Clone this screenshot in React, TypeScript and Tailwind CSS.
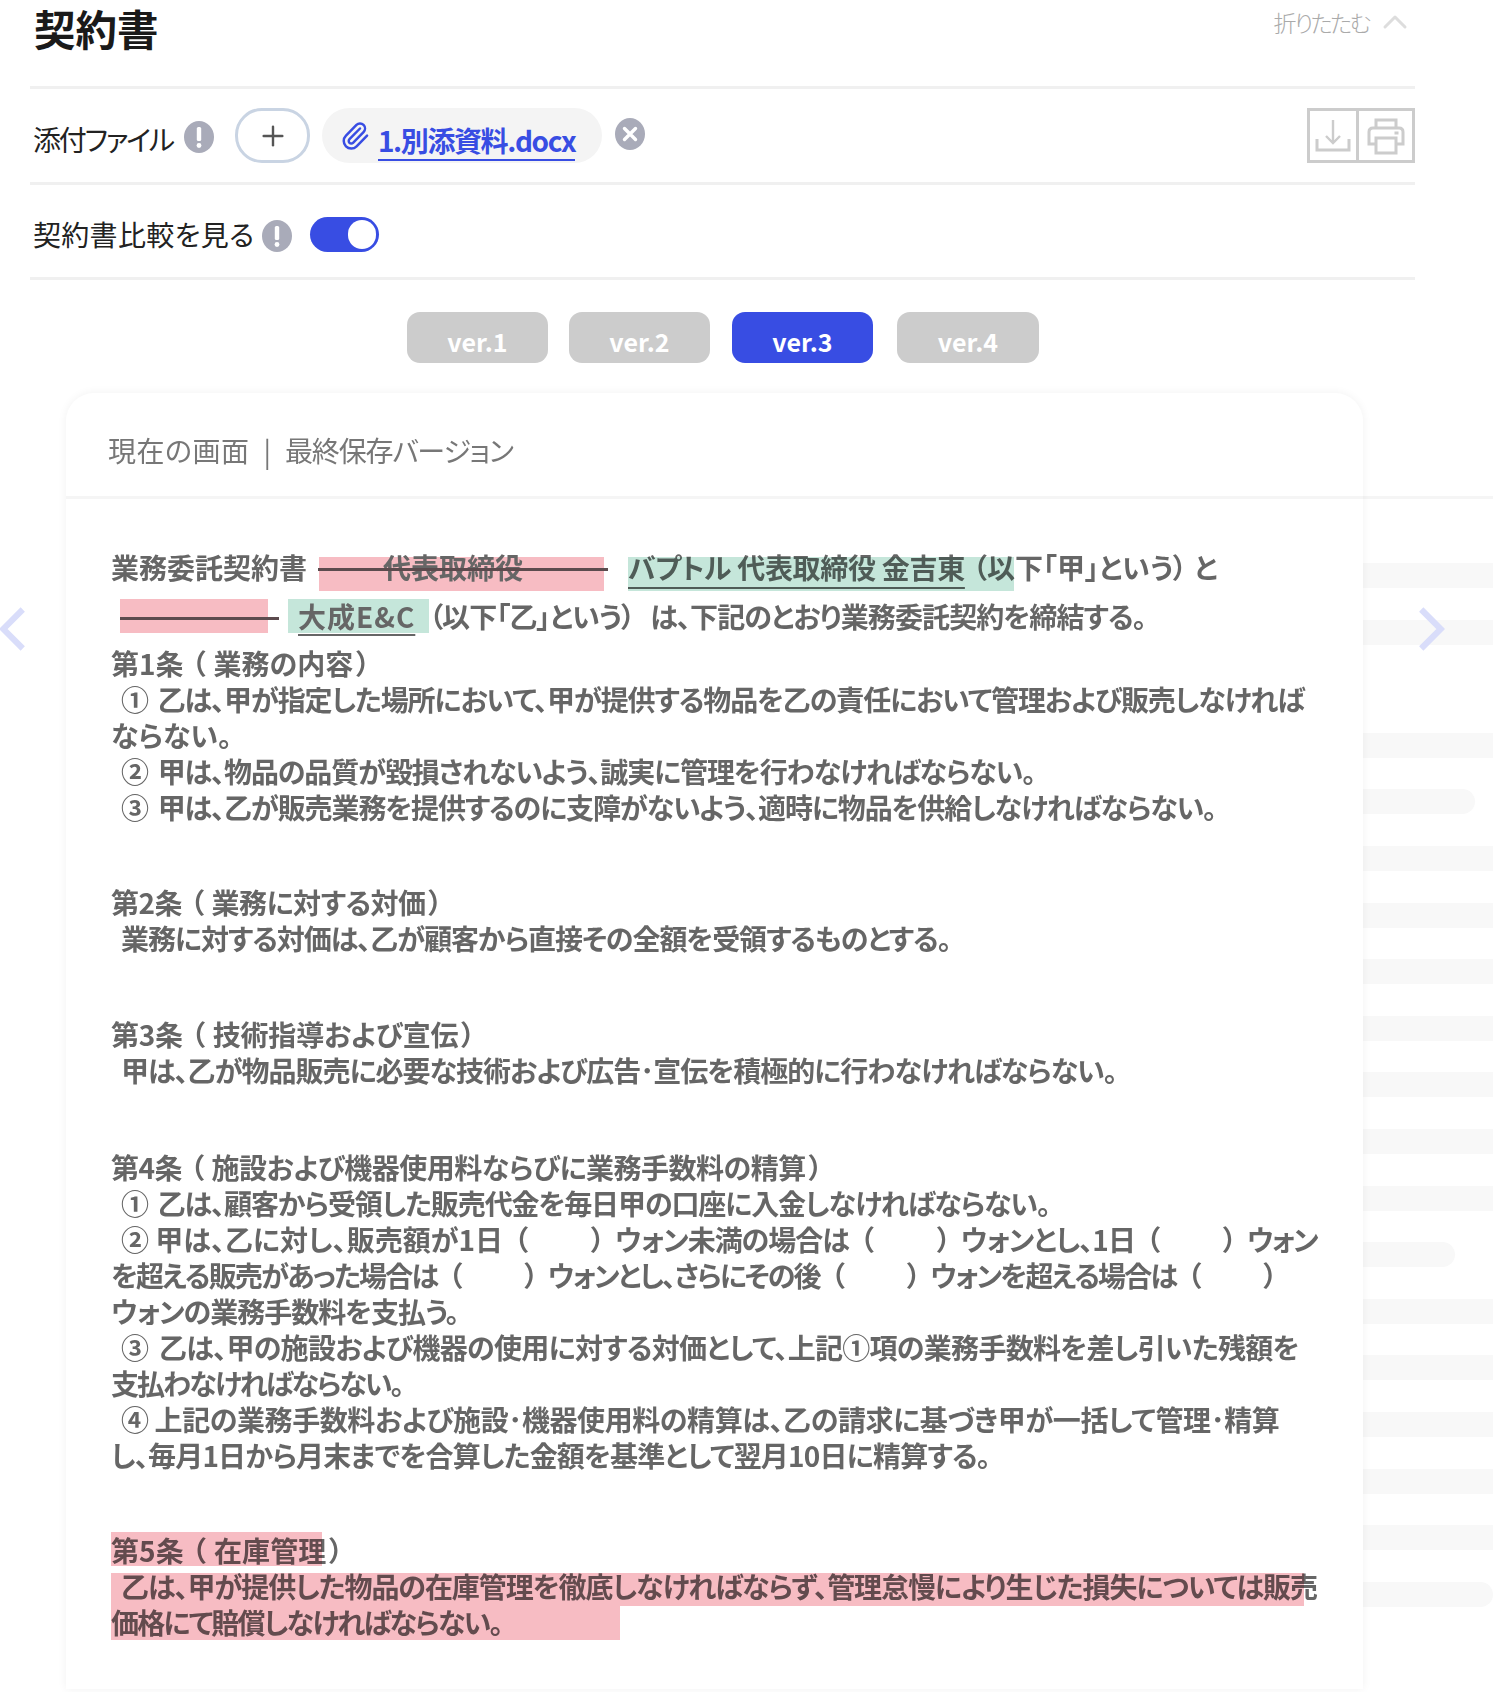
import { ChevronLeft, ChevronRight, ChevronUp, Paperclip, Plus } from "lucide-react";

const SKELETON = [
  "h-[25px] w-full",
  "h-[25px] w-full",
  "h-[25px] w-full bg-transparent",
  "h-[25px] w-full",
  "h-[25px] w-[112px] rounded-r-full",
  "h-[25px] w-full",
  "h-[25px] w-full",
  "h-[25px] w-full",
  "h-[25px] w-full",
  "h-[25px] w-full",
  "h-[25px] w-full",
  "h-[25px] w-full",
  "h-[25px] w-[92px] rounded-r-full",
  "h-[25px] w-full",
  "h-[25px] w-full",
  "h-[25px] w-full",
  "h-[25px] w-full",
  "h-[25px] w-full",
  "h-[25px] w-[130px] rounded-r-full",
];

function InfoIcon({ className }: { className?: string }) {
  return (
    <svg viewBox="0 0 30 32" className={`h-[32px] w-[30px] shrink-0 ${className ?? ""}`}>
      <ellipse cx="15" cy="16" rx="15" ry="16" fill="#a9abb9" />
      <rect x="12.8" y="6" width="4.4" height="14" rx="1.5" fill="#fff" />
      <circle cx="15" cy="24.5" r="2.4" fill="#fff" />
    </svg>
  );
}

function Line({ children, className }: { children: React.ReactNode; className?: string }) {
  return <div className={`h-[36px] whitespace-pre leading-[36px] ${className ?? ""}`}>{children}</div>;
}

// blank to fill in, written in the contract as （　　）
function Blank() {
  return (
    <span className="mx-[11px]">
      （<span className="inline-block w-[64px]" />）
    </span>
  );
}

function Open() {
  return <span className="mx-[8px]">（</span>;
}

function Close() {
  return <span className="ml-[3px]">）</span>;
}

function Version({ label, active, className }: { label: string; active?: boolean; className?: string }) {
  return (
    <button
      className={`h-[51px] rounded-[13px] pt-[7px] text-[25px] font-bold leading-[40px] text-white ${active ? "bg-[#384de3]" : "bg-[#cccccc]"} ${className ?? ""}`}
    >
      {label}
    </button>
  );
}

export default function App() {
  return (
    <div className="relative h-[1692px] w-[1493px] overflow-hidden bg-white font-['Noto_Sans_CJK_JP',sans-serif] [font-feature-settings:'palt']">
      <div className="ml-[30px] w-[1385px]">
        <div className="flex h-[89px] items-start justify-between border-b-[3px] border-[#f0f0f0]">
          <h1 className="pl-[4px] text-[41.5px] font-bold leading-[56px] text-[#1a1a1a]">契約書</h1>
          <div className="flex items-center pt-[6px]">
            <span className="text-[23px] font-light leading-[32px] tracking-[-2.5px] text-[#aaaaaa]">折りたたむ</span>
            <ChevronUp className="-my-[4px] ml-[6px] h-[40px] w-[40px] text-[#dddddd]" strokeWidth={1.8} />
          </div>
        </div>

        <div className="flex h-[96px] items-start border-b-[3px] border-[#f0f0f0] pt-[19px]">
          <span className="w-[154px] whitespace-nowrap pl-[3px] pt-[11px] text-[28px] leading-[40px] tracking-[-2.2px] text-[#222222]">
            添付ファイル
          </span>
          <InfoIcon className="mt-[13px]" />
          <div className="ml-[21px] flex h-[55px] w-[75px] items-center justify-center rounded-[27px] border-[3px] border-[#c9d4e3]">
            <Plus className="h-[32px] w-[32px] text-[#555555]" strokeWidth={1.8} />
          </div>
          <div className="ml-[12px] flex h-[55px] w-[280px] items-center rounded-full bg-[#f4f4f4] pl-[18px]">
            <Paperclip className="h-[30px] w-[30px] text-[#384de3]" strokeWidth={2} />
            <span className="ml-[8px] mt-[11px] whitespace-nowrap border-b-[2px] border-[#384de3] text-[28px] font-bold leading-[38px] tracking-[-1.4px] text-[#384de3]">
              1.別添資料.docx
            </span>
          </div>
          <svg viewBox="0 0 30 32" className="ml-[13px] mt-[10px] h-[32px] w-[30px]">
            <ellipse cx="15" cy="16" rx="15" ry="16" fill="#a9abb9" />
            <path d="M9.5 10.5 L20.5 21.5 M20.5 10.5 L9.5 21.5" stroke="#fff" strokeWidth="3.4" strokeLinecap="round" />
          </svg>
          <div className="ml-auto flex h-[55px] w-[108px] border-[3px] border-[#cccccc]">
            <div className="flex w-[49px] items-center justify-center border-r-[3px] border-[#cccccc]">
              <svg viewBox="0 0 36 36" className="h-[36px] w-[36px]" fill="none" stroke="#cccccc">
                <path d="M18 2 V25 M11 18 L18 25 L25 18" strokeWidth="2.4" />
                <path d="M2 21 V32 H34 V21" strokeWidth="3" />
              </svg>
            </div>
            <div className="flex flex-1 items-center justify-center">
              <svg viewBox="0 0 38 38" className="h-[38px] w-[38px]" fill="none" stroke="#cccccc" strokeWidth="3">
                <path d="M9 11 V3 H29 V11" />
                <path d="M9 27 H2 V15 Q2 11 6 11 H32 Q36 11 36 15 V27 H29" />
                <path d="M9 21 H29 V36 H9 Z" />
                <rect x="28" y="15" width="3" height="2" fill="#cccccc" strokeWidth="1" />
              </svg>
            </div>
          </div>
        </div>

        <div className="flex h-[95px] items-start border-b-[3px] border-[#f0f0f0] pt-[29px]">
          <span className="w-[232px] whitespace-nowrap pl-[3px] text-[28px] leading-[40px] tracking-[0.3px] text-[#222222]">
            契約書比較を見る
          </span>
          <InfoIcon className="mt-[6px]" />
          <div className="ml-[18px] mt-[3px] flex h-[35px] w-[69px] items-center justify-end rounded-full bg-[#384de3] pr-[3px]">
            <div className="h-[29px] w-[28px] rounded-full bg-white" />
          </div>
        </div>
      </div>

      <div className="flex pl-[407px] pt-[32px]">
        <Version label="ver.1" className="w-[141px]" />
        <Version label="ver.2" className="ml-[21px] w-[141px]" />
        <Version label="ver.3" active className="ml-[22px] w-[141px]" />
        <Version label="ver.4" className="ml-[24px] w-[142px]" />
      </div>

      <div className="mt-[30px] flex pl-[66px]">
        <div className="relative z-10 h-[1296px] w-[1297px] rounded-t-[28px] bg-white shadow-[0_0_10px_rgba(0,0,0,0.06)]">
          <div className="h-[106px] whitespace-pre border-b-[3px] border-[#f5f5f5] pl-[42px] pt-[37px] text-[28px] leading-[40px] text-[#777777]">
            <span className="tracking-[0.5px]">現在の画面</span>
            <span className="mx-[14px]">|</span>
            <span className="tracking-[-1.2px]">最終保存バージョン</span>
          </div>

          <div className="pl-[45px] pt-[58px] text-[28px] font-bold text-[#666666]">
            <div className="flex h-[34px] whitespace-pre leading-[20px]">
              <span className="w-[208px]">業務委託契約書</span>
              <div className="relative h-[34px] w-[285px] bg-[#f7bcc3] pl-[64px] mix-blend-multiply">
                代表取締役
                <span className="absolute -left-[1px] top-[11px] h-[3px] w-[290px] bg-[#5c4b4e]" />
              </div>
              <div className="relative ml-[24px]">
                <span className="absolute left-0 top-0 h-[34px] w-[386px] bg-[#c5e6da] mix-blend-multiply" />
                <span className="tracking-[-0.3px] underline decoration-[2px] underline-offset-[8px]">バプトル 代表取締役 金吉東</span>
                <span className="ml-[8px]">（以下「甲」という）</span>
                <span className="ml-[7px]">と</span>
              </div>
            </div>

            <div className="mt-[8px] flex h-[34px] whitespace-pre pl-[9px] leading-[34px]">
              <div className="relative h-[34px] w-[148px] bg-[#f7bcc3]">
                <span className="absolute left-0 top-[18px] h-[3px] w-[159px] bg-[#5c4b4e]" />
              </div>
              <div className="ml-[20px] h-[34px] w-[141px] bg-[#c5e6da] pl-[10px]">
                <span className="tracking-[1px] underline decoration-[2px] underline-offset-[6px]">大成E&C</span>
              </div>
              <span className="tracking-[-0.9px]">
                （以下「乙」という）<span className="ml-[16px]">は、下記のとおり業務委託契約を締結する。</span>
              </span>
            </div>

            <div className="mt-[12px]">
              <Line>第1条<Open />業務の内容<Close /></Line>
              <Line className="pl-[10px] tracking-[-1.1px]">① {"\u2009"}乙は、甲が指定した場所において、甲が提供する物品を乙の責任において管理および販売しなければ</Line>
              <Line>ならない。</Line>
              <Line className="pl-[10px] tracking-[-1.1px]">② {"\u2009"}甲は、物品の品質が毀損されないよう、誠実に管理を行わなければならない。</Line>
              <Line className="pl-[10px] tracking-[-1.1px]">③ {"\u2009"}甲は、乙が販売業務を提供するのに支障がないよう、適時に物品を供給しなければならない。</Line>
            </div>

            <div className="mt-[59px]">
              <Line className="tracking-[-0.5px]">第2条<Open />業務に対する対価<Close /></Line>
              <Line className="pl-[10px] tracking-[-1.05px]">業務に対する対価は、乙が顧客から直接その全額を受領するものとする。</Line>
            </div>

            <div className="mt-[60px]">
              <Line className="tracking-[-0.2px]">第3条<Open />技術指導および宣伝<Close /></Line>
              <Line className="pl-[10px] tracking-[-1px]">甲は、乙が物品販売に必要な技術および広告･宣伝を積極的に行わなければならない。</Line>
            </div>

            <div className="mt-[61px]">
              <Line className="tracking-[-0.5px]">第4条<Open />施設および機器使用料ならびに業務手数料の精算<Close /></Line>
              <Line className="pl-[10px] tracking-[-1.1px]">① {"\u2009"}乙は、顧客から受領した販売代金を毎日甲の口座に入金しなければならない。</Line>
              <Line className="pl-[10px] tracking-[-1px]">
                <span className="tracking-[0px]">② 甲は、乙に対し、販売額が1日</span><Blank />ウォン未満の場合は<Blank />ウォンとし、1日<Blank /><span className="tracking-[-2px]">ウォン</span>
              </Line>
              <Line className="tracking-[-1.8px]">を超える販売があった場合は<Blank />ウォンとし、さらにその後<Blank />ウォンを超える場合は<Blank /></Line>
              <Line className="tracking-[-1px]">ウォンの業務手数料を支払う。</Line>
              <Line className="pl-[10px] tracking-[-0.7px]">③ {"\u2009"}乙は、甲の施設および機器の使用に対する対価として、上記①項の業務手数料を差し引いた残額を</Line>
              <Line className="tracking-[-2px]">支払わなければならない。</Line>
              <Line className="pl-[10px] tracking-[-0.4px]">④ 上記の業務手数料および施設･機器使用料の精算は、乙の請求に基づき甲が一括して管理･精算</Line>
              <Line className="tracking-[-0.8px]">し、毎月1日から月末までを合算した金額を基準として翌月10日に精算する。</Line>
            </div>

            <div className="relative mt-[59px]">
              <Line className="tracking-[0.1px]">第5条<Open />在庫管理<Close /></Line>
              <Line className="pl-[10px] tracking-[-1.05px]">乙は、甲が提供した物品の在庫管理を徹底しなければならず、管理怠慢により生じた損失については販売</Line>
              <Line className="tracking-[-1.8px]">価格にて賠償しなければならない。</Line>
              <span className="absolute left-0 top-0 h-[34px] w-[211px] bg-[#f7bcc3] mix-blend-multiply" />
              <span className="absolute left-0 top-[41px] h-[33px] w-[1193px] bg-[#f7bcc3] mix-blend-multiply" />
              <span className="absolute left-0 top-[74px] h-[34px] w-[509px] bg-[#f7bcc3] mix-blend-multiply" />
            </div>
          </div>
        </div>

        <div className="mt-[103px] flex h-[1193px] flex-1 flex-col gap-[31.6px] border-t-[3px] border-[#f5f5f5] pt-[64px]">
          {SKELETON.map((bar, i) => (
            <div key={i} className={`shrink-0 bg-[#f8f8f8] ${bar}`} />
          ))}
        </div>
      </div>

      <ChevronLeft
        className="absolute left-[-26px] top-[590px] z-20 h-[78px] w-[78px] text-[#d9ddfa]"
        strokeWidth={1.85}
        strokeLinecap="butt"
        strokeLinejoin="miter"
      />
      <ChevronRight
        className="absolute left-[1392px] top-[590px] z-20 h-[78px] w-[78px] text-[#d9ddfa]"
        strokeWidth={1.85}
        strokeLinecap="butt"
        strokeLinejoin="miter"
      />
    </div>
  );
}
